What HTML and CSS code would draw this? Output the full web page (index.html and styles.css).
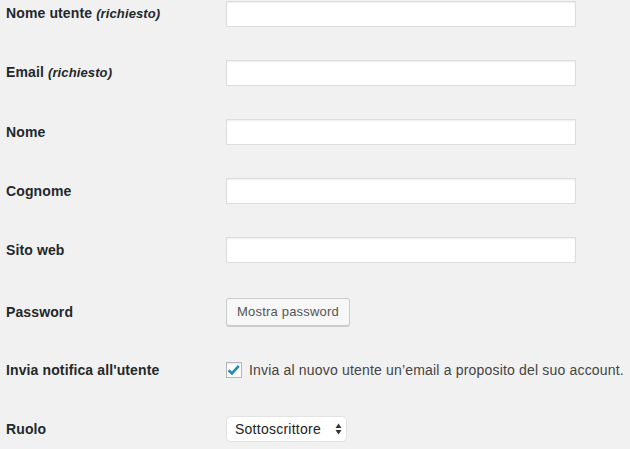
FILE: index.html
```html
<!DOCTYPE html>
<html lang="it">
<head>
<meta charset="utf-8">
<title>Aggiungi nuovo utente</title>
<link rel="stylesheet" href="styles.css">
</head>
<body>
<form class="form-table">
  <div class="row">
    <label class="th" for="user_login">Nome utente <span class="description">(richiesto)</span></label>
    <div class="td"><input class="text" type="text" id="user_login"></div>
  </div>
  <div class="row">
    <label class="th" for="email">Email <span class="description">(richiesto)</span></label>
    <div class="td"><input class="text" type="text" id="email"></div>
  </div>
  <div class="row">
    <label class="th" for="first_name">Nome</label>
    <div class="td"><input class="text" type="text" id="first_name"></div>
  </div>
  <div class="row">
    <label class="th" for="last_name">Cognome</label>
    <div class="td"><input class="text" type="text" id="last_name"></div>
  </div>
  <div class="row">
    <label class="th" for="url">Sito web</label>
    <div class="td"><input class="text" type="text" id="url"></div>
  </div>
  <div class="row row-pass">
    <div class="th">Password</div>
    <div class="td"><button type="button" class="button">Mostra password</button></div>
  </div>
  <div class="row row-notify">
    <div class="th">Invia notifica all'utente</div>
    <div class="td">
      <label class="check-label">
        <span class="checkbox">
          <svg width="14" height="14" viewBox="0 0 14 14"><path d="M1.6 7.2 L4.9 10.4 L11.8 2.9" fill="none" stroke="#1e8cbe" stroke-width="2.6" stroke-linecap="butt" stroke-linejoin="miter"/></svg>
        </span>
        Invia al nuovo utente un’email a proposito del suo account.
      </label>
    </div>
  </div>
  <div class="row row-role">
    <label class="th" for="role">Ruolo</label>
    <div class="td">
      <div class="select-wrap">
        <select id="role" class="select"><option>Sottoscrittore</option></select>
        <svg class="select-arrows" width="7" height="12" viewBox="0 0 7 12"><path d="M3.5 0.5 L6.5 5 L0.5 5 Z M0.5 7 L6.5 7 L3.5 11.5 Z" fill="#333"/></svg>
      </div>
    </div>
  </div>
</form>
</body>
</html>
```

FILE: styles.css
```css
html, body {
  margin: 0;
  padding: 0;
  background: #f1f1f1;
}
body {
  font-family: "Liberation Sans", Arial, Helvetica, sans-serif;
  font-size: 14px;
  color: #444;
  overflow: hidden;
}
.form-table {
  margin-top: -16px;
  padding-left: 6px;
}
.row {
  display: grid;
  grid-template-columns: 220px 404px;
  align-items: center;
  height: 59px;
}
.row-pass { height: 65px; }
.row-notify { height: 52px; }
.row-role { height: 66px; }
.th {
  font-weight: bold;
  font-size: 14px;
  color: #23282d;
  line-height: 18px;
  letter-spacing: 0.12px;
}
.description {
  font-style: italic;
  font-size: 13px;
}
.td {
  display: flex;
  align-items: center;
}
.text {
  box-sizing: border-box;
  width: 350px;
  height: 26px;
  margin: 0;
  padding: 3px 5px;
  border: 1px solid #ddd;
  background: #fff;
  box-shadow: inset 0 1px 2px rgba(0, 0, 0, 0.07);
  font: 14px "Liberation Sans", Arial, sans-serif;
  outline: none;
}
.button {
  box-sizing: border-box;
  height: 28px;
  width: 124px;
  margin: 0;
  padding: 0;
  border: 1px solid #ccc;
  border-radius: 3px;
  background: #f7f7f7;
  box-shadow: 0 1px 0 #ccc;
  color: #555;
  font: 13px "Liberation Sans", Arial, sans-serif;
  letter-spacing: 0.2px;
  line-height: 26px;
  text-align: center;
}
.check-label {
  display: flex;
  align-items: center;
  gap: 7px;
  color: #444;
  font-size: 14px;
  line-height: 20px;
  letter-spacing: 0.18px;
  white-space: nowrap;
}
.checkbox {
  box-sizing: border-box;
  flex: none;
  width: 16px;
  height: 16px;
  border: 1px solid #b4b9be;
  background: #fff;
  box-shadow: inset 0 1px 2px rgba(0, 0, 0, 0.1);
  display: flex;
  align-items: center;
  justify-content: center;
}
.select-wrap {
  position: relative;
  width: 121px;
  height: 26px;
}
.select {
  appearance: none;
  -webkit-appearance: none;
  box-sizing: border-box;
  width: 121px;
  height: 26px;
  margin: 0;
  padding: 0 20px 0 8px;
  border: 1px solid #e2e2e2;
  border-radius: 5px;
  background: #fff;
  color: #222;
  font: 14px "Liberation Sans", Arial, sans-serif;
  letter-spacing: 0.25px;
  outline: none;
}
.select-arrows {
  position: absolute;
  right: 5px;
  top: 7px;
  pointer-events: none;
}
```
